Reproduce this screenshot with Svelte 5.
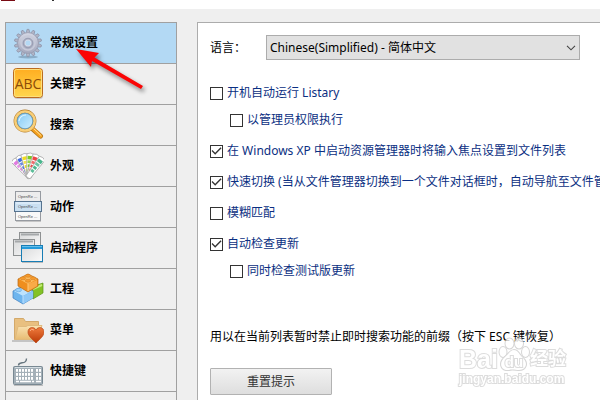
<script lang="ts">
  const pages = [
    { id: "general", label: "常规设置" },
    { id: "keywords", label: "关键字" },
    { id: "search", label: "搜索" },
    { id: "appearance", label: "外观" },
    { id: "actions", label: "动作" },
    { id: "launcher", label: "启动程序" },
    { id: "project", label: "工程" },
    { id: "menu", label: "菜单" },
    { id: "hotkeys", label: "快捷键" },
  ];

  let current = $state("general");
  let language = $state("zh-CN");

  let options = $state([
    { id: "autorun", label: "开机自动运行 Listary", checked: false, sub: false },
    { id: "admin", label: "以管理员权限执行", checked: false, sub: true },
    { id: "focus", label: "在 Windows XP 中启动资源管理器时将输入焦点设置到文件列表", checked: true, sub: false },
    { id: "switch", label: "快速切换 (当从文件管理器切换到一个文件对话框时，自动导航至文件管", checked: true, sub: false },
    { id: "fuzzy", label: "模糊匹配", checked: false, sub: false },
    { id: "update", label: "自动检查更新", checked: true, sub: false },
    { id: "beta", label: "同时检查测试版更新", checked: false, sub: true },
  ]);

  const teeth = Array.from({ length: 14 }, (_, i) => (i * 360) / 14);

  const swatches = [
    { angle: -42, color: "#e07be0" },
    { angle: -26, color: "#4169e0" },
    { angle: -11, color: "#f2dc20" },
    { angle: 5, color: "#7ccb22" },
    { angle: 21, color: "#ee4545" },
    { angle: 38, color: "#49b58d" },
  ];

  const keyRows = [14, 18, 22];
  const keyCols = [4, 7, 10, 13, 16, 19, 24, 27];
</script>

{#snippet icon(id: string)}
  <svg class="icon" viewBox="0 0 32 32" aria-hidden="true">
    {#if id === "general"}
      <defs>
        <linearGradient id="steel" x2="0" y2="1">
          <stop offset="0" stop-color="#d5d8e5" />
          <stop offset="1" stop-color="#a4a8bd" />
        </linearGradient>
      </defs>
      <ellipse cx="16" cy="30" rx="10" ry="1.5" fill="#5a7890" opacity=".45" />
      {#each teeth as angle}
        <path d="M14.2 6 15 2.4h2L17.8 6z" fill="#b2b6c7" stroke="#8b90a5" stroke-width=".7" transform="rotate({angle} 16 16)" />
      {/each}
      <circle cx="16" cy="16" r="10.4" fill="url(#steel)" stroke="#9a9eb3" stroke-width=".8" />
      <circle cx="16" cy="16" r="7" fill="none" stroke="#c7cad9" stroke-width="1.5" />
      <circle cx="16" cy="16" r="4.8" fill="#b0b4c6" stroke="#969bb1" />
      <circle cx="16" cy="16" r="3" fill="#b4d8f3" stroke="#e0e3ee" stroke-width=".7" />
    {:else if id === "keywords"}
      <defs>
        <linearGradient id="amber" x2="0" y2="1">
          <stop offset="0" stop-color="#ffad20" />
          <stop offset="1" stop-color="#ffd74e" />
        </linearGradient>
      </defs>
      <rect x="2" y="2" width="29" height="29" rx="3" fill="#888" opacity=".35" />
      <rect x="1.5" y=".5" width="29" height="29" rx="3" fill="url(#amber)" stroke="#bb6c20" />
      <rect x="2.5" y="1.5" width="27" height="27" rx="2" fill="none" stroke="#ffe07b" />
      <text class="abc" x="16" y="21" text-anchor="middle">ABC</text>
    {:else if id === "search"}
      <defs>
        <linearGradient id="lens" x2="1" y2="1">
          <stop offset="0" stop-color="#78c3f3" />
          <stop offset=".5" stop-color="#a9dcfa" />
          <stop offset="1" stop-color="#d8f2ff" />
        </linearGradient>
      </defs>
      <path d="M20 19.5 28.5 27" stroke="#b57818" stroke-width="5" stroke-linecap="round" />
      <path d="M20.5 19.5 28.5 27" stroke="#f6a11f" stroke-width="3.4" stroke-linecap="round" />
      <path d="M21.5 19.5 29 26.5" stroke="#ffe39b" stroke-linecap="round" />
      <circle cx="13" cy="12" r="9.6" fill="url(#lens)" stroke="#b27a28" stroke-width="3.6" />
      <circle cx="13" cy="12" r="9.6" fill="none" stroke="#f8cf79" stroke-width="2.5" />
      <circle cx="13" cy="12" r="7.8" fill="none" stroke="#5c9cc7" stroke-width=".8" />
      <path d="M7 12q1-6 7-6" fill="none" stroke="#dff4ff" stroke-width="1.2" />
    {:else if id === "appearance"}
      {#each swatches as { angle, color }}
        <g transform="rotate({angle} 17 26)">
          <path d="M14.5 27.5 13 4q3.5-2 7 0l-.5 23.5q-2.5 1.5-5 0z" fill="#fff" stroke="#aaa" stroke-width=".8" />
          <rect x="14" y="6" width="5" height="3.4" fill={color} />
          <rect x="14.3" y="10.5" width="4.4" height="2.8" fill={color} opacity=".8" />
          <rect x="14.8" y="14.5" width="3.6" height="2.8" fill={color} />
          <rect x="15" y="18.5" width="3.2" height="2.8" fill={color} opacity=".9" />
        </g>
      {/each}
    {:else if id === "actions"}
      <rect x="3.5" y=".5" width="25" height="10" fill="#ededed" stroke="#969aa0" />
      <rect x="3.5" y="20.5" width="25" height="9" fill="#f9f9f9" stroke="#969aa0" />
      <rect x="2.5" y="10.5" width="27" height="10" fill="#c9dff1" stroke="#56738f" />
      <path d="M4 12h24" stroke="#eaf5ff" />
      <text class="tiny" x="6" y="7">OpenRe ...</text>
      <text class="tiny" x="6" y="17">OpenRe ...</text>
      <text class="tiny" x="6" y="27">OpenRe ...</text>
      <path d="M4 30.5h25" stroke="#aaa" opacity=".6" />
    {:else if id === "launcher"}
      <defs>
        <linearGradient id="pane" x2="1" y2="1">
          <stop offset="0" stop-color="#d8d9da" />
          <stop offset="1" stop-color="#fafafa" />
        </linearGradient>
      </defs>
      <rect x="7.5" y=".5" width="21" height="16" fill="url(#pane)" stroke="#8e9192" />
      <path d="M9 2.5h18" stroke="#a5a8aa" stroke-width="2" />
      <rect x="1.5" y="7.5" width="21" height="16" fill="url(#pane)" stroke="#8e9192" />
      <path d="M3 9.5h18" stroke="#a5a8aa" stroke-width="2" />
      <rect x="9.5" y="13.5" width="21" height="16" fill="url(#pane)" stroke="#177db5" />
      <path d="M10 15.5h20" stroke="#259bdb" stroke-width="3" />
      <path d="M10 14.5h20" stroke="#68c0ea" />
      <path d="M10 30.5h21" stroke="#888" opacity=".5" />
    {:else if id === "project"}
      <path d="m20 14 5-2 6-2v10l-10 6z" fill="#83c226" stroke="#5d9719" stroke-width=".7" />
      <path d="m21 16 9-4" stroke="#c4ec72" stroke-width="2" />
      <path d="m1 18 10-5 10 5v7l-10 6-10-6z" fill="#6eb5ee" stroke="#427fbe" stroke-width=".7" />
      <path d="m2 18 9-4 9 4-9 5z" fill="#bde2fd" />
      <path d="m11 23 10-5v7l-10 6z" fill="#8fc8f6" />
      <path d="M11 23v7" stroke="#bde0ff" />
      <ellipse cx="6.5" cy="17" rx="3" ry="1.7" fill="#9bd1fa" stroke="#5298d3" stroke-width=".5" />
      <path d="m6 6 10-5 10 5v7l-10 6-10-6z" fill="#ef8e1e" stroke="#b96812" stroke-width=".7" />
      <path d="m16 11 9-4v6l-9 5z" fill="#f8ab48" />
      <path d="m7 6 9-4 9 4-9 5z" fill="#ffbf61" />
      <path d="M16 11v7" stroke="#ffca7a" />
      <g fill="#f79a2c" stroke="#cb7a20" stroke-width=".5">
        <ellipse cx="16" cy="2.8" rx="2.8" ry="1.5" />
        <ellipse cx="11" cy="5.3" rx="2.8" ry="1.5" />
        <ellipse cx="21" cy="5.3" rx="2.8" ry="1.5" />
        <ellipse cx="16" cy="7.8" rx="2.8" ry="1.5" />
      </g>
    {:else if id === "menu"}
      <defs>
        <linearGradient id="manila" x2="0" y2="1">
          <stop offset="0" stop-color="#fae2b1" />
          <stop offset="1" stop-color="#e7bc73" />
        </linearGradient>
        <linearGradient id="heart" x2="0" y2="1">
          <stop offset="0" stop-color="#ee7a3c" />
          <stop offset="1" stop-color="#bb3905" />
        </linearGradient>
      </defs>
      <path d="M0 27h24" stroke="#777" stroke-width="2" opacity=".35" />
      <path d="M2.5 25.5v-21h9l2 3h13v17z" fill="#e9c080" stroke="#d3a96a" />
      <path d="M3 25.5 6 12.5h8l2-1h14l-5 14z" fill="url(#manila)" stroke="#e0ba7c" />
      <path d="M24 29C20 25 16 22 16 18c0-5 6-6 8-2 2-4 8-3 8 2 0 4-4 7-8 11z" fill="url(#heart)" stroke="#b9491a" stroke-width=".7" />
      <path d="M18 17q1-3 4-1" fill="none" stroke="#ffb083" />
    {:else}
      <path d="M6.5 10.5c0-5 8 0 8-7" fill="none" stroke="#687780" stroke-width="1.4" />
      <rect x="1.5" y="11.5" width="29" height="18" rx="1" fill="#a4b0b8" stroke="#788892" />
      <path d="M3 12.5h26" stroke="#d4dde2" />
      {#each keyRows as y}
        {#each keyCols as x}
          <rect {x} {y} width="2" height="2.8" fill="#fff" />
        {/each}
      {/each}
      <path d="M4 26.5h3m1 0h11m1 0h2m2 0h5" stroke="#fff" stroke-width="1.6" />
      <path d="M2 30.5h29" stroke="#777" opacity=".4" />
    {/if}
  </svg>
{/snippet}

<div class="window">
  <header class="titlebar" aria-hidden="true">
    <span class="logo"></span>
    <span class="title-tail"></span>
  </header>

  <div class="body">
    <nav class="sidebar">
      {#each pages as page (page.id)}
        <button class="page" class:active={current === page.id} onclick={() => (current = page.id)}>
          {@render icon(page.id)}
          <span>{page.label}</span>
        </button>
      {/each}
    </nav>

    <main class="panel">
      <div class="language">
        <label for="language">语言：</label>
        <div class="dropdown">
          <select id="language" bind:value={language}>
            <option value="zh-CN">Chinese(Simplified) - 简体中文</option>
            <option value="en">English</option>
          </select>
          <svg class="chevron" viewBox="0 0 10 6" aria-hidden="true">
            <path d="m1 .8 4 4 4-4" fill="none" stroke="#444" stroke-width="1.1" />
          </svg>
        </div>
      </div>

      <div class="options">
        {#each options as option (option.id)}
          <label class="option" class:sub={option.sub}>
            <input type="checkbox" bind:checked={option.checked} />
            <span>{option.label}</span>
          </label>
        {/each}
      </div>

      <p class="hint">用以在当前列表暂时禁止即时搜索功能的前缀（按下 ESC 键恢复）</p>
      <button class="reset">重置提示</button>
    </main>
  </div>

  <svg class="arrow" viewBox="0 0 90 60" aria-hidden="true">
    <path d="M6 6 29 10 24.5 14.5 73 43l-2 3L22 18 21 24z" fill="#fa0505" />
  </svg>

  <div class="watermark" aria-hidden="true">
    <div class="brand">
      <span>Bai</span>
      <svg class="paw" viewBox="0 0 32 34">
        <g fill="#fff" stroke="#ccc" stroke-width="2">
          <ellipse cx="5" cy="15" rx="3.5" ry="5" />
          <ellipse cx="11.5" cy="6.5" rx="4" ry="5" />
          <ellipse cx="21" cy="6.5" rx="4" ry="5" />
          <ellipse cx="27.5" cy="15" rx="3.5" ry="5" />
          <path d="M16 13c4 0 5 4 8 7 7 6 4 13-3 13-3 0-7-1-10 0-8 1-11-7-4-13 4-3 5-7 9-7z" />
        </g>
        <text x="16" y="30" text-anchor="middle">du</text>
      </svg>
      <span class="cn">经验</span>
    </div>
    <div class="site">jingyan.baidu.com</div>
  </div>
</div>

<style>
  :global(body) {
    margin: 0;
    overflow: hidden;
    background: #efefef;
  }

  .window {
    position: relative;
    min-height: 100vh;
    display: flex;
    flex-direction: column;
    font: 12px/18px "Noto Sans", "Noto Sans CJK SC", sans-serif;
    color: #000;
  }

  button,
  select {
    font: inherit;
    color: inherit;
  }

  .titlebar {
    height: 9px;
    display: flex;
    gap: 37px;
    padding-left: 1px;
    box-sizing: border-box;
    background: #fff;
  }

  .logo {
    width: 14px;
    height: 1px;
    background: #790b13;
  }

  .title-tail {
    width: 2px;
    height: 1px;
    background: #333;
  }

  .body {
    flex: 1;
    display: flex;
    gap: 20px;
    padding: 13px 0 0 5px;
  }

  .sidebar {
    width: 170px;
    flex: none;
    border: 1px solid #a0a0a0;
    border-bottom: 0;
  }

  .page {
    width: 100%;
    height: 41px;
    display: flex;
    align-items: center;
    gap: 6px;
    padding: 0 6px;
    border: 0;
    border-bottom: 1px solid #a0a0a0;
    background: #efefef;
    font-weight: bold;

    &.active {
      background: #b3d9f4;
    }
  }

  .icon {
    width: 32px;
    height: 32px;
    flex: none;
  }

  .abc {
    font: 14px "Open Sans", sans-serif;
    fill: #8b4b08;
  }

  .tiny {
    font: 4px "Liberation Sans", sans-serif;
    fill: #444;
  }

  .panel {
    flex: 1;
    min-width: 0;
    padding: 12px;
    border: 1px solid #acacac;
    border-width: 1px 0 0 1px;
    background: #fff;
    overflow: hidden;
  }

  .language {
    display: flex;
    align-items: center;

    & label {
      width: 56px;
      flex: none;
    }
  }

  .dropdown {
    position: relative;
    width: 314px;
  }

  select {
    display: block;
    width: 100%;
    height: 25px;
    padding: 0 24px 0 3px;
    appearance: none;
    border: 1px solid #acacac;
    border-radius: 0;
    background: #e1e1e1;
  }

  .chevron {
    position: absolute;
    right: 4px;
    top: 10px;
    width: 10px;
    height: 6px;
    pointer-events: none;
  }

  .options {
    display: flex;
    flex-direction: column;
    gap: 13px;
    padding-top: 24px;
  }

  .option {
    display: flex;
    align-items: center;
    gap: 4px;
    white-space: nowrap;
    color: #0b2f82;

    &.sub {
      margin-top: -4px;
      padding-left: 20px;
    }
  }

  input[type="checkbox"] {
    width: 13px;
    height: 13px;
    flex: none;
    margin: 0;
    appearance: none;
    border: 1px solid #333;
    background: #fff;

    &:checked::before {
      content: "";
      display: block;
      width: 11px;
      height: 11px;
      background: #333;
      clip-path: polygon(5% 50%, 13% 42%, 38% 67%, 87% 17%, 96% 26%, 38% 84%);
    }
  }

  .hint {
    margin: 48px 0 22px;
    white-space: nowrap;
  }

  .reset {
    width: 122px;
    height: 27px;
    padding: 0;
    border: 1px solid #b2b2b2;
    border-radius: 1px;
    background: linear-gradient(#f2f2f2, #dedede);
    color: #333;
  }

  .arrow {
    position: absolute;
    left: 70px;
    top: 43px;
    width: 90px;
    height: 60px;
    pointer-events: none;
    filter: drop-shadow(2px 3px 2px rgb(0 0 0 / 45%));
  }

  .watermark {
    position: absolute;
    left: 459px;
    top: 337px;
    color: #fff;
    font-family: "Liberation Sans", "Noto Sans CJK SC", sans-serif;
    font-weight: bold;
    -webkit-text-stroke: 2px #d4d4d4;
    paint-order: stroke fill;
    pointer-events: none;
    opacity: 0.8;
  }

  .brand {
    display: flex;
    align-items: flex-end;
    height: 34px;
    font-size: 25px;
    line-height: 24px;
  }

  .paw {
    width: 32px;
    height: 34px;

    & text {
      font-size: 15px;
      fill: #fff;
      stroke: #d4d4d4;
      stroke-width: 2px;
    }
  }

  .cn {
    font-size: 18px;
  }

  .site {
    font-size: 12px;
    line-height: 16px;
  }
</style>
